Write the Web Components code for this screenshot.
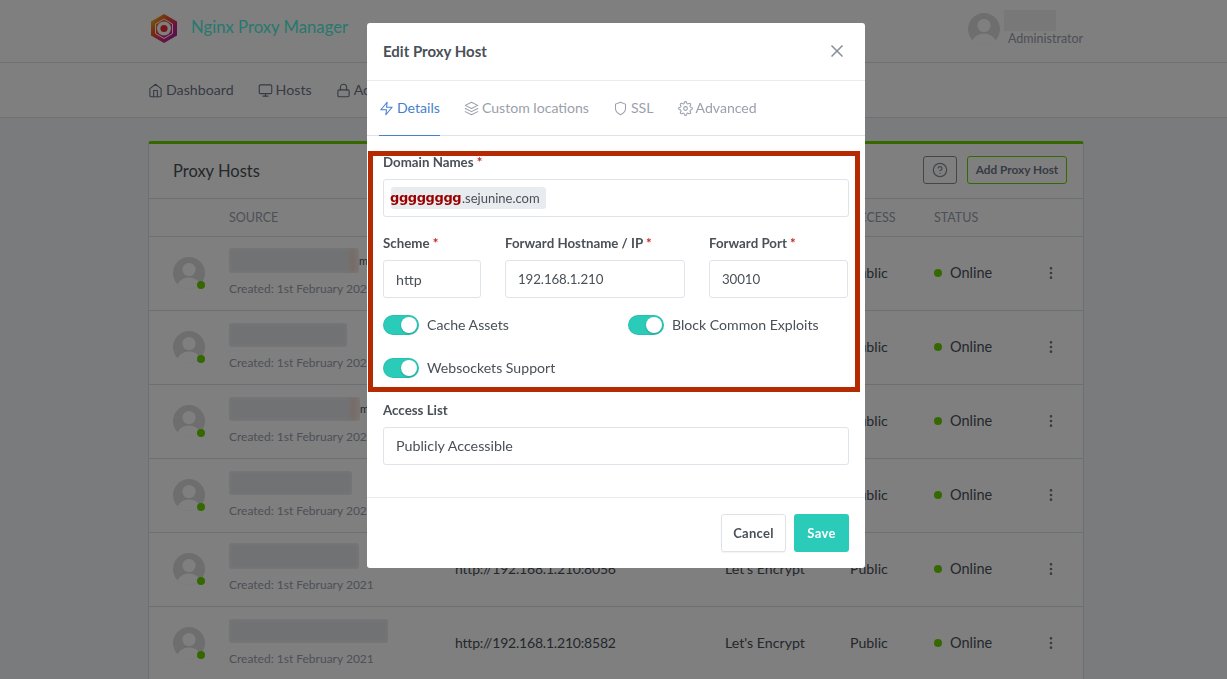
<!DOCTYPE html>
<html lang="en">
<head>
<meta charset="utf-8">
<title>Nginx Proxy Manager</title>
<style>
  html, body { margin: 0; height: 679px; overflow: hidden; background: #f5f7fb; }
  body { font: 400 15px/20px Lato, "Liberation Sans", sans-serif; color: #495057; }
  main { display: block; width: 1232px; }
</style>
</head>
<body>
<main>
  <npm-header></npm-header>
  <npm-nav></npm-nav>
  <npm-card title="Proxy Hosts">
    <npm-host-row name-width="130" name-height="25" name-top="11" tint></npm-host-row>
    <npm-host-row name-width="118" name-height="24" name-top="12"></npm-host-row>
    <npm-host-row name-width="131" name-height="24" name-top="12" tint></npm-host-row>
    <npm-host-row name-width="123" name-height="24" name-top="12"></npm-host-row>
    <npm-host-row name-width="130" name-height="26" name-top="10" dest="http://192.168.1.210:8056" ssl="Let's Encrypt"></npm-host-row>
    <npm-host-row name-width="159" name-height="24" name-top="12" dest="http://192.168.1.210:8582" ssl="Let's Encrypt"></npm-host-row>
  </npm-card>
</main>

<npm-modal title="Edit Proxy Host">
  <form-field label="Domain Names" required>
    <text-box><domain-chip name="gggggggg" rest=".sejunine.com"></domain-chip></text-box>
  </form-field>
  <form-row>
    <form-field label="Scheme" required style="width:98px"><text-box style="padding-top:2px">http</text-box></form-field>
    <form-field label="Forward Hostname / IP" required style="width:180px"><text-box numeric>192.168.1.210</text-box></form-field>
    <form-field label="Forward Port" required style="width:139px"><text-box numeric>30010</text-box></form-field>
  </form-row>
  <toggle-grid>
    <toggle-switch>Cache Assets</toggle-switch>
    <toggle-switch>Block Common Exploits</toggle-switch>
    <toggle-switch>Websockets Support</toggle-switch>
  </toggle-grid>
  <form-field label="Access List"><text-box>Publicly Accessible</text-box></form-field>
</npm-modal>

<script>
/* feather icon bodies, stroke only */
const ICONS = {
  home: '<path d="M3 9l9-7 9 7v11a2 2 0 0 1-2 2H5a2 2 0 0 1-2-2z"/><polyline points="9 22 9 12 15 12 15 22"/>',
  monitor: '<rect x="2" y="3" width="20" height="14" rx="2"/><line x1="8" y1="21" x2="16" y2="21"/><line x1="12" y1="17" x2="12" y2="21"/>',
  lock: '<rect x="3" y="11" width="18" height="11" rx="2"/><path d="M7 11V7a5 5 0 0 1 10 0v4"/>',
  zap: '<polygon points="13 2 3 14 12 14 11 22 21 10 12 10 13 2"/>',
  layers: '<polygon points="12 2 2 7 12 12 22 7 12 2"/><polyline points="2 17 12 22 22 17"/><polyline points="2 12 12 17 22 12"/>',
  shield: '<path d="M12 22s8-4 8-10V5l-8-3-8 3v7c0 6 8 10 8 10z"/>',
  settings: '<circle cx="12" cy="12" r="3"/><path d="M19.4 15a1.65 1.65 0 0 0 .33 1.82l.06.06a2 2 0 0 1 0 2.83 2 2 0 0 1-2.83 0l-.06-.06a1.65 1.65 0 0 0-1.82-.33 1.65 1.65 0 0 0-1 1.51V21a2 2 0 0 1-2 2 2 2 0 0 1-2-2v-.09A1.65 1.65 0 0 0 9 19.4a1.65 1.65 0 0 0-1.82.33l-.06.06a2 2 0 0 1-2.83 0 2 2 0 0 1 0-2.83l.06-.06a1.65 1.65 0 0 0 .33-1.82 1.65 1.65 0 0 0-1.51-1H3a2 2 0 0 1-2-2 2 2 0 0 1 2-2h.09A1.65 1.65 0 0 0 4.6 9a1.65 1.65 0 0 0-.33-1.82l-.06-.06a2 2 0 0 1 0-2.83 2 2 0 0 1 2.83 0l.06.06a1.65 1.65 0 0 0 1.82.33H9a1.65 1.65 0 0 0 1-1.51V3a2 2 0 0 1 2-2 2 2 0 0 1 2 2v.09a1.65 1.65 0 0 0 1 1.51 1.65 1.65 0 0 0 1.82-.33l.06-.06a2 2 0 0 1 2.83 0 2 2 0 0 1 0 2.83l-.06.06a1.65 1.65 0 0 0-.33 1.82V9a1.65 1.65 0 0 0 1.51 1H21a2 2 0 0 1 2 2 2 2 0 0 1-2 2h-.09a1.65 1.65 0 0 0-1.51 1z"/>',
  x: '<line x1="18" y1="6" x2="6" y2="18"/><line x1="6" y1="6" x2="18" y2="18"/>',
  help: '<circle cx="12" cy="12" r="10"/><path d="M9.09 9a3 3 0 0 1 5.83 1c0 2-3 3-3 3"/><line x1="12" y1="17" x2="12.01" y2="17"/>',
  more: '<circle cx="12" cy="12" r="1"/><circle cx="12" cy="5" r="1"/><circle cx="12" cy="19" r="1"/>'
};

const GREEN = '#6cd000';

class Base extends HTMLElement {
  connectedCallback() {
    if (this.shadowRoot) return;
    this.attachShadow({ mode: 'open' }).innerHTML = this.render();
  }
  attr(name, fallback = '') { return this.getAttribute(name) ?? fallback; }
}

class FeIcon extends Base {
  render() {
    const s = this.attr('size', '15');
    return `<style>:host{display:inline-flex;flex:none}svg{display:block}</style>
      <svg width="${s}" height="${s}" viewBox="0 0 24 24" fill="none" stroke="currentColor"
        stroke-width="${this.attr('weight', '2')}" stroke-linecap="round" stroke-linejoin="round">${ICONS[this.attr('name')]}</svg>`;
  }
}

class AvatarPic extends Base {
  render() {
    const s = this.attr('size', '32');
    return `<style>:host{display:block;width:${s}px;height:${s}px}svg{display:block}</style>
      <svg width="${s}" height="${s}" viewBox="0 0 32 32">
        <defs><clipPath id="c"><circle cx="16" cy="16" r="16"/></clipPath></defs>
        <g clip-path="url(#c)">
          <rect width="32" height="32" fill="#dcdcdc"/>
          <circle cx="16" cy="12.5" r="6.6" fill="#fff"/>
          <path d="M3 33c1-9 7-12.500 13-12.500s12 3.500 13 12.500z" fill="#fff"/>
        </g>
      </svg>`;
  }
}

class NpmHeader extends Base {
  render() {
    return `<style>
      :host{display:block;background:#fff;border-bottom:1px solid #dfe1e6;height:62px}
      .in{width:936px;margin:0 auto;height:100%;display:flex;align-items:center;justify-content:space-between;box-sizing:border-box;padding:0 0 5px 3px}
      .brand{display:flex;align-items:center;gap:14px;font-size:16.700px;color:#4ff0dc}
      .brand span{margin-bottom:4px}
      .user{display:flex;align-items:center;gap:8px;width:116px}
      .who{display:flex;flex-direction:column;font-size:12.500px;line-height:15px;color:#9aa0ac;margin-top:-2px}
      .who i{display:block;width:52px;height:21px;background:#f1f1f2;margin-left:-4px}
    </style>
    <div class="in">
      <div class="brand">
        <svg width="26" height="29" viewBox="0 0 26 29">
          <defs><linearGradient id="g" x1="0" y1="0" x2="1" y2="1">
            <stop offset="0" stop-color="#e0e02a"/><stop offset=".35" stop-color="#f0561f"/>
            <stop offset=".7" stop-color="#d0208a"/><stop offset="1" stop-color="#7a2fa0"/></linearGradient></defs>
          <polygon points="13,0 26,7.500 26,21.500 13,29 0,21.500 0,7.500" fill="url(#g)"/>
          <polygon points="13,5 21.500,10 21.500,19.500 13,24.500 4.500,19.500 4.500,10" fill="none" stroke="#fff" stroke-width="1"/>
          <circle cx="13" cy="14.500" r="7" fill="#fff"/><circle cx="13" cy="14.500" r="3.600" fill="#e62d35"/>
        </svg>
        <span>Nginx Proxy Manager</span>
      </div>
      <div class="user"><avatar-pic></avatar-pic><div class="who"><i></i><span>Administrator</span></div></div>
    </div>`;
  }
}

class NpmNav extends Base {
  render() {
    return `<style>
      :host{display:block;background:#fff;border-bottom:1px solid #dfe1e6;height:54px}
      .in{width:936px;margin:0 auto;height:100%;display:flex;align-items:center;gap:24px;color:#6e7687;font-size:14.200px}
      span{display:inline-flex;align-items:center;gap:3px}
    </style>
    <div class="in">
      <span><fe-icon name="home" size="15" weight="1.800"></fe-icon>Dashboard</span>
      <span><fe-icon name="monitor" size="15" weight="1.800"></fe-icon>Hosts</span>
      <span><fe-icon name="lock" size="15" weight="1.800"></fe-icon>Access Lists</span>
    </div>`;
  }
}

class NpmCard extends Base {
  render() {
    return `<style>
      :host{display:block;width:936px;box-sizing:border-box;margin:23px auto 0;background:#fff;
        border:1px solid #dcdfe4;border-top:3px solid ${GREEN};border-radius:3px}
      .top{height:55px;display:flex;align-items:center;padding:0 16px 2px 24px;box-sizing:border-box;border-bottom:1px solid #dcdfe4}
      h3{margin:2px 0 0;font:400 16.500px/20px Lato,"Liberation Sans",sans-serif;color:#495057;flex:1}
      .btn{box-sizing:border-box;height:28px;border:1px solid #868e96;border-radius:3px;display:flex;align-items:center;justify-content:center;background:#fff}
      .help{width:34px;color:#868e96;margin-right:10px}
      .add{width:100px;border-color:${GREEN};color:#6e7687;font-size:11.800px;font-weight:700}
      .heads{display:grid;grid-template-columns:80px 226px 270px 125px 84px 1fr;height:38px;box-sizing:border-box;align-items:center;
        border-bottom:1px solid #dcdfe4;font-size:12.500px;color:#9aa0ac}
    </style>
    <div class="top"><h3>${this.attr('title')}</h3>
      <div class="btn help"><fe-icon name="help" size="16" weight="1.800"></fe-icon></div>
      <div class="btn add">Add Proxy Host</div>
    </div>
    <div class="heads"><span></span><span>SOURCE</span><span></span><span></span><span>ACCESS</span><span>STATUS</span></div>
    <slot></slot>`;
  }
}

class NpmHostRow extends Base {
  render() {
    const w = this.attr('name-width'), h = this.attr('name-height'), t = this.attr('name-top');
    const tint = this.hasAttribute('tint');
    const fill = tint ? 'linear-gradient(90deg,#e3e4e7 0,#e3e4e7 91%,#efd8ce 95%,#f1e6e1 100%)' : '#e3e4e7';
    return `<style>
      :host{display:grid;grid-template-columns:80px 226px 270px 125px 84px 1fr;height:74px;box-sizing:border-box;padding-bottom:2px;
        border-bottom:1px solid #dcdfe4;align-items:center;font-size:14.200px;color:#495057}
      .pic{position:relative;width:32px;height:32px;margin-left:24px}
      .pic b{position:absolute;right:0;bottom:0;width:8px;height:8px;border-radius:50%;background:${GREEN}}
      .src{align-self:start;padding-top:${t}px}
      .line{display:flex;align-items:center;font-size:11px;line-height:${h}px;height:${h}px}
      .name{width:${w}px;height:${h}px;border-radius:3px;background:${fill};box-shadow:inset 0 0 4px #f3f3f4;flex:none}
      .created{position:absolute;font-size:12px;line-height:16px;color:#9aa0ac;margin-top:${44 - t - h}px;white-space:nowrap}
      .dest{font-size:14px;letter-spacing:-.200px}
      .status{display:flex;align-items:center;gap:8px;position:relative;font-size:14.500px}
      .status b{width:8px;height:8px;border-radius:50%;background:${GREEN}}
      .menu{position:absolute;left:109px;color:#6e7687;display:flex}
    </style>
    <div class="pic"><avatar-pic></avatar-pic><b></b></div>
    <div class="src"><div class="line"><div class="name"></div>${tint ? '<span>m</span>' : ''}</div><div class="created">Created: 1st February 2021</div></div>
    <div class="dest">${this.attr('dest')}</div>
    <div>${this.attr('ssl')}</div>
    <div>Public</div>
    <div class="status"><b></b>Online<span class="menu"><fe-icon name="more" size="16"></fe-icon></span></div>`;
  }
}

class NpmModal extends Base {
  render() {
    return `<style>
      :host{position:fixed;left:0;top:0;width:1232px;height:679px;background:rgba(0,0,0,.5);display:flex;justify-content:center;align-items:flex-start;padding-top:23px;box-sizing:border-box}
      .dlg{position:relative;width:498px;height:545px;background:#fff;border-radius:3px;display:flex;flex-direction:column;color:#495057}
      .head{height:58px;flex:none;box-sizing:border-box;border-bottom:1px solid #e9ecef;display:flex;align-items:center;justify-content:space-between;padding:0 18px 2px 16px}
      h5{margin:0;font:700 15px/20px Lato,"Liberation Sans",sans-serif;color:#495057}
      .close{color:#8a9097;display:flex}
      .tabs{height:55px;flex:none;box-sizing:border-box;border-bottom:1px solid #dee2e6;display:flex;gap:24px;padding:0 12px}
      .body{flex:1;padding:16px 16px 0;display:flex;flex-direction:column}
      .foot{height:71px;flex:none;box-sizing:border-box;border-top:1px solid #e9ecef;display:flex;justify-content:flex-end;align-items:center;gap:8px;padding:0 16px}
      .btn{box-sizing:border-box;height:38px;border-radius:3px;display:flex;align-items:center;justify-content:center;font-size:13px;font-weight:700;letter-spacing:.3px}
      .cancel{width:65px;border:1px solid #dfe2e7;color:#495057;background:#fff;box-shadow:0 1px 1px rgba(0,0,0,.05)}
      .save{width:55px;background:#2bcbba;color:#fff}
      .mark{position:absolute;left:1px;top:128px;width:492px;height:241px;box-sizing:border-box;border:5px solid #b52a00;pointer-events:none}
    </style>
    <div class="dlg">
      <div class="head"><h5>${this.attr('title')}</h5><span class="close"><fe-icon name="x" size="20"></fe-icon></span></div>
      <div class="tabs">
        <modal-tab icon="zap" active>Details</modal-tab>
        <modal-tab icon="layers">Custom locations</modal-tab>
        <modal-tab icon="shield">SSL</modal-tab>
        <modal-tab icon="settings">Advanced</modal-tab>
      </div>
      <div class="body"><slot></slot></div>
      <div class="foot"><div class="btn cancel">Cancel</div><div class="btn save">Save</div></div>
      <div class="mark"></div>
    </div>`;
  }
}

class ModalTab extends Base {
  render() {
    const on = this.hasAttribute('active');
    return `<style>
      :host{display:flex;align-items:center;gap:3px;font-size:14.100px;height:55px;box-sizing:border-box;
        color:${on ? '#467fcf' : '#9aa0ac'};border-bottom:1px solid ${on ? '#467fcf' : 'transparent'}}
    </style><fe-icon name="${this.attr('icon')}" size="15" weight="1.700"></fe-icon><slot></slot>`;
  }
}

class FormField extends Base {
  render() {
    const star = this.hasAttribute('required') ? '<span class="req"> *</span>' : '';
    return `<style>
      :host{display:block;margin-bottom:16px}
      label{display:block;font-size:13.300px;line-height:20px;font-weight:700;color:#495057;margin-bottom:7px}
      .req{color:#cd201f}
    </style><label>${this.attr('label')}${star}</label><slot></slot>`;
  }
}

class FormRow extends Base {
  render() {
    return `<style>:host{display:flex;justify-content:space-between;gap:24px;width:465px;margin-bottom:1px}</style><slot></slot>`;
  }
}

class TextBox extends Base {
  render() {
    const num = this.hasAttribute('numeric') ? 'font-size:13.300px;letter-spacing:-.100px;' : '';
    return `<style>
      :host{display:flex;align-items:center;box-sizing:border-box;height:38px;border:1px solid #dfe3ea;border-radius:3px;padding:0 12px;font-size:14.300px;${num}color:#495057;background:#fff}
    </style><slot></slot>`;
  }
}

class DomainChip extends Base {
  render() {
    return `<style>
      :host{display:inline-flex;align-items:center;height:22px;width:155px;box-sizing:border-box;margin-left:-5px;background:#e9ecef;border-radius:3px;font-size:13px;white-space:nowrap}
      b{color:#9b0000;font:700 13px/22px "DejaVu Sans",sans-serif;letter-spacing:-.400px;width:72px;margin-left:-1px;flex:none}
    </style><b>${this.attr('name')}</b><span>${this.attr('rest')}</span>`;
  }
}

class ToggleGrid extends Base {
  render() {
    return `<style>:host{display:grid;grid-template-columns:245px 1fr;row-gap:23px;margin-bottom:22px}</style><slot></slot>`;
  }
}

class ToggleSwitch extends Base {
  render() {
    return `<style>
      :host{display:flex;align-items:center;gap:8px;height:20px;font-size:14.100px;color:#495057}
      .t{position:relative;width:36px;height:20px;border-radius:10px;background:#2bcbba;flex:none;box-shadow:inset 0 0 0 1px rgba(0,0,0,.05)}
      .t::after{content:"";position:absolute;right:2px;top:2px;width:16px;height:16px;border-radius:50%;background:#fff;box-shadow:0 1px 2px rgba(0,0,0,.2)}
    </style><span class="t"></span><slot></slot>`;
  }
}

const TAGS = { 'fe-icon': FeIcon, 'avatar-pic': AvatarPic, 'npm-header': NpmHeader, 'npm-nav': NpmNav, 'npm-card': NpmCard,
  'npm-host-row': NpmHostRow, 'npm-modal': NpmModal, 'modal-tab': ModalTab, 'form-field': FormField, 'form-row': FormRow,
  'text-box': TextBox, 'domain-chip': DomainChip, 'toggle-grid': ToggleGrid, 'toggle-switch': ToggleSwitch };
for (const [tag, cls] of Object.entries(TAGS)) customElements.define(tag, cls);
</script>
</body>
</html>
